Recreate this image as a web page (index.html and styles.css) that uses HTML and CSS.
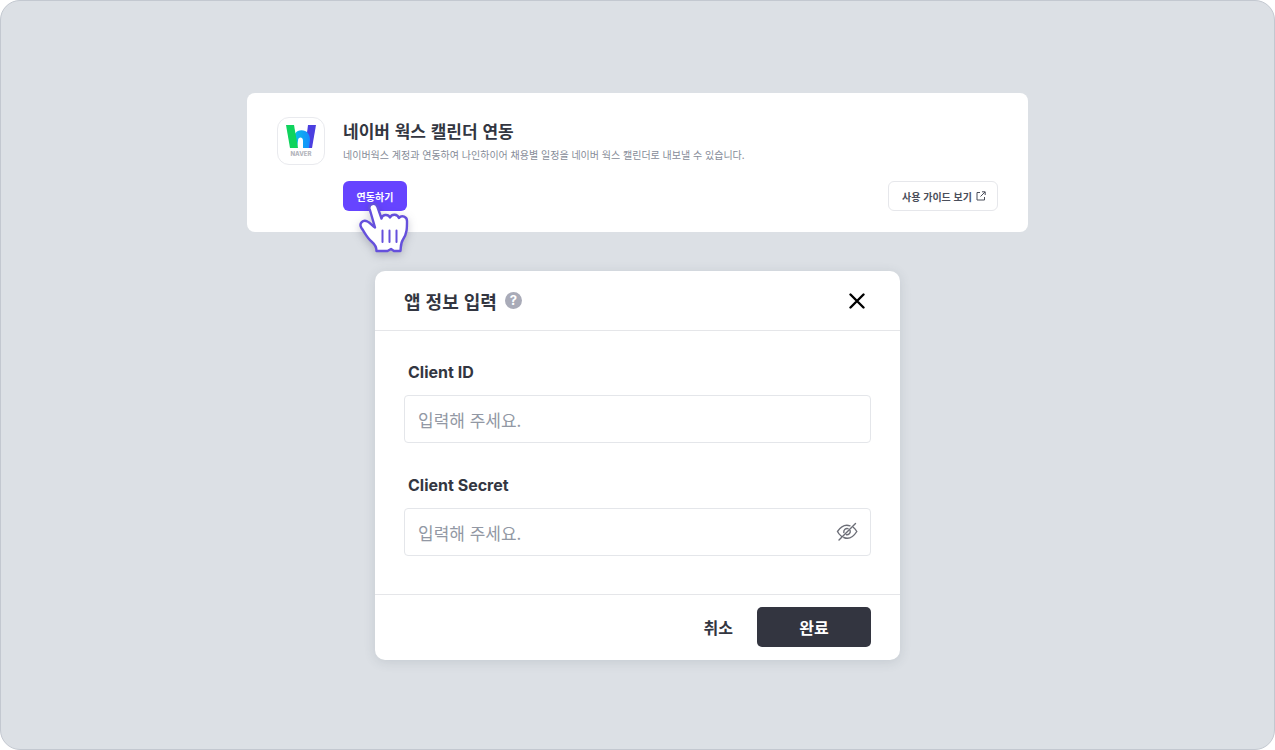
FILE: index.html
```html
<!DOCTYPE html>
<html lang="ko">
<head>
  <meta charset="UTF-8">
  <meta name="viewport" content="width=device-width, initial-scale=1">
  <title>네이버 웍스 캘린더 연동</title>
  <link rel="stylesheet" href="styles.css">
</head>
<body>
  <main class="scene">
    <section class="card">
      <div class="card-logo">
        <svg width="32" height="23" viewBox="0 0 32 22" preserveAspectRatio="none" aria-hidden="true">
          <defs>
            <linearGradient id="arch" x1="0" x2="1">
              <stop offset="0" stop-color="#08c4e4"/>
              <stop offset="1" stop-color="#168cff"/>
            </linearGradient>
          </defs>
          <path fill="#4b3fe0" d="M23 0H31L27 22H20Z"/>
          <path fill="url(#arch)" d="M8 17C8 9 11 5 16.500 5C22 5 25 9 25 14L24 22H18V15C18 11 13 11 13 15L12 22Z"/>
          <path fill="#0fd35d" d="M1 0H9L13 22H5Z"/>
        </svg>
        <span class="logo-name">NAVER</span>
      </div>
      <div class="card-body">
        <h1 class="card-title">네이버 웍스 캘린더 연동</h1>
        <p class="card-text">네이버웍스 계정과 연동하여 나인하이어 채용별 일정을 네이버 웍스 캘린더로 내보낼 수 있습니다.</p>
        <div class="card-actions">
          <div class="connect">
            <button type="button" class="btn-small btn-connect">연동하기</button>
            <svg class="pointer" width="50" height="52" viewBox="0 0 50 52" aria-hidden="true">
              <path d="M17.500 49C17.500 45 16 42.500 13 40C8 36 6 31 2.500 26C-.5 21.500 4 17 8.500 19.500C11.500 21 13.500 24 16 25.500L10.500 6.500C9.500 1.500 16.500 0 18.500 5L22.500 16.500C23 12.500 29 11.500 31 15.500C33 11.500 38.500 12 40 16C43 12.500 48 15 48 19C48 26 48 32 44 37.500C41.500 41 42 44 41.500 49H35L32 47L28.500 49Z"/>
              <path class="pointer-lines" d="M23.500 28.500V40M30.500 28.500V40M37.500 28.500V40"/>
            </svg>
          </div>
          <a href="#" class="btn-small btn-guide">사용 가이드 보기
            <svg width="10" height="10" viewBox="0 0 10 10" aria-hidden="true">
              <path d="M4 1.5H1V9H8.5V6M6 .8H9.2V4M9 1L4.5 5.5"/>
            </svg>
          </a>
        </div>
      </div>
    </section>

    <form class="dialog" role="dialog" aria-labelledby="dialog-title">
      <header class="dialog-header">
        <h2 class="dialog-title" id="dialog-title">앱 정보 입력</h2>
        <button type="button" class="help" aria-label="도움말">?</button>
        <button type="button" class="close" aria-label="닫기">
          <svg width="16" height="16" viewBox="0 0 16 16" aria-hidden="true">
            <path d="M1.5 1.5L14.5 14.5M14.5 1.5L1.5 14.5"/>
          </svg>
        </button>
      </header>

      <div class="dialog-body">
        <div class="field">
          <label class="field-label" for="client-id">Client ID</label>
          <div class="field-box">
            <input class="field-input" type="text" id="client-id" placeholder="입력해 주세요.">
          </div>
        </div>
        <div class="field">
          <label class="field-label" for="client-secret">Client Secret</label>
          <div class="field-box">
            <input class="field-input" type="password" id="client-secret" placeholder="입력해 주세요.">
            <button type="button" class="reveal" aria-label="비밀번호 표시">
              <svg width="22" height="20" viewBox="0 0 22 20" aria-hidden="true">
                <path d="M14 3.800C9 2 4.500 5 1.500 9.500C2.500 11.500 3.800 13 5.200 14M17.500 5.500C19 6.700 20 8.200 20.800 9.500C17 15.500 12 17.300 7.800 15.500M12 6.600C9.700 6 7.500 7.700 7.800 10.500M14.200 8.800C14.600 11.200 12.700 13 10.400 12.700M19.500 1.500L3 18"/>
              </svg>
            </button>
          </div>
        </div>
      </div>

      <footer class="dialog-footer">
        <button type="button" class="btn btn-cancel">취소</button>
        <button type="submit" class="btn btn-submit">완료</button>
      </footer>
    </form>
  </main>
</body>
</html>
```
FILE: styles.css
```css
* {
  box-sizing: border-box;
}

body {
  margin: 0;
  background: #fff;
  color: #333641;
  font-family: "Noto Sans CJK KR", sans-serif;
}

button,
input {
  font-family: inherit;
}

button {
  padding: 0;
  border: none;
  background: none;
  cursor: pointer;
}

svg {
  display: block;
  fill: none;
}

.scene {
  min-height: 100vh;
  padding: 92px 24px 40px;
  display: flex;
  flex-direction: column;
  align-items: center;
  gap: 39px;
  background: #dce0e5;
  border: 1px solid #c3c8d0;
  border-radius: 20px;
}

/* Integration card */
.card {
  width: 100%;
  max-width: 781px;
  padding: 24px 30px 21px;
  display: flex;
  gap: 18px;
  background: #fff;
  border-radius: 8px;
}

.card-logo {
  flex: none;
  width: 48px;
  height: 48px;
  display: flex;
  flex-direction: column;
  align-items: center;
  justify-content: center;
  gap: 3px;
  border: 1px solid #e9eaee;
  border-radius: 12px;
}

.logo-name {
  color: #b3b5bc;
  font: 800 6px/6px Inter, sans-serif;
}

.card-body {
  flex: 1;
}

.card-title {
  margin: 0;
  font-size: 17px;
  font-weight: 700;
  line-height: 28px;
}

.card-text {
  margin: 0 0 16px;
  color: #868c98;
  font-size: 10px;
  line-height: 20px;
}

.card-actions {
  display: flex;
  justify-content: space-between;
}

.btn-small {
  height: 30px;
  display: flex;
  align-items: center;
  justify-content: center;
  border-radius: 6px;
  font-size: 10px;
  font-weight: 700;
}

.connect {
  position: relative;
}

.btn-connect {
  width: 64px;
  background: #6644ff;
  color: #fff;
}

.pointer {
  position: absolute;
  top: 21px;
  left: 16px;
  overflow: visible;
  fill: #fff;
  stroke: #6550dc;
  stroke-width: 2.4;
  stroke-linejoin: round;
  filter: drop-shadow(0 3px 4px rgba(40, 40, 70, 0.25));
  pointer-events: none;
}

.pointer-lines {
  stroke-width: 2;
  stroke-linecap: round;
}

.btn-guide {
  padding: 0 11px 0 13px;
  gap: 4px;
  border: 1px solid #e6e7eb;
  color: #4a4e5a;
  text-decoration: none;
}

.btn-guide svg {
  stroke: #4a4e5a;
}

/* App info dialog */
.dialog {
  width: 100%;
  max-width: 525px;
  background: #fff;
  border-radius: 10px;
  box-shadow: 0 2px 12px rgba(60, 70, 85, 0.14);
}

.dialog-header {
  height: 60px;
  padding: 0 29px;
  display: flex;
  align-items: center;
  gap: 8px;
  border-bottom: 1px solid #e5e6e9;
}

.dialog-title {
  margin: 0;
  font-size: 18px;
  font-weight: 700;
  line-height: 24px;
}

.help {
  width: 17px;
  height: 17px;
  border-radius: 50%;
  background: #a9abb8;
  color: #fff;
  font: 700 13px/17px Inter, sans-serif;
}

.close {
  margin-left: auto;
  padding: 6px;
}

.close svg {
  stroke: #000;
  stroke-width: 2.4;
  stroke-linecap: round;
}

.dialog-body {
  padding: 29px 29px 38px;
  display: flex;
  flex-direction: column;
  gap: 30px;
}

.field-label {
  display: block;
  margin: 0 4px 11px;
  font: 700 16px/24px Inter, sans-serif;
}

.field-box {
  height: 48px;
  padding: 0 12px 0 13px;
  display: flex;
  align-items: center;
  border: 1px solid #e4e6ea;
  border-radius: 4px;
}

.field-input {
  flex: 1;
  min-width: 0;
  height: 100%;
  padding: 0;
  border: none;
  outline: none;
  background: none;
  color: #333641;
  font-size: 17px;
}

.field-input::placeholder {
  color: #9298a4;
  opacity: 1;
}

.reveal svg {
  stroke: #6c6e77;
  stroke-width: 1.4;
  stroke-linecap: round;
}

.dialog-footer {
  padding: 12px 29px 13px;
  display: flex;
  justify-content: flex-end;
  gap: 8px;
  border-top: 1px solid #e5e6e9;
}

.btn {
  height: 40px;
  border-radius: 5px;
  color: #333641;
  font-size: 16px;
  font-weight: 700;
  line-height: 24px;
}

.btn-cancel {
  padding: 0 16px;
}

.btn-submit {
  width: 114px;
  background: #333540;
  color: #fff;
}
```
